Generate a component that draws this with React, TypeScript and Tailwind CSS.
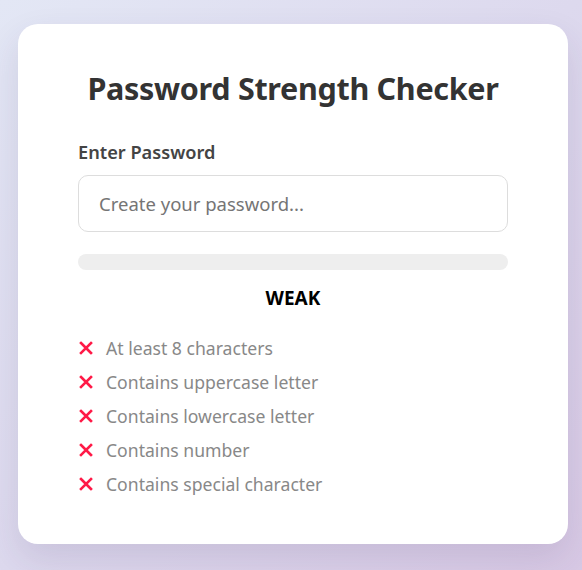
import React from "react";

const reqs = [
  "At least 8 characters",
  "Contains uppercase letter",
  "Contains lowercase letter",
  "Contains number",
  "Contains special character",
];

function XIcon() {
  return (
    <svg width="14" height="14" viewBox="0 0 14 14" className="shrink-0">
      <path d="M2 2 L12 12 M12 2 L2 12" stroke="#ff1a47" strokeWidth="2.6" strokeLinecap="square" />
    </svg>
  );
}

export default function App() {
  return (
    <div
      className="min-h-[570px] w-full flex justify-center items-start pt-[24px] pl-[4px] bg-[linear-gradient(135deg,#e3e7f5_0%,#ddd9ee_50%,#d8c9e5_100%)]"
      style={{ fontFamily: '"Noto Sans", "Open Sans", sans-serif' }}
    >
      <div className="w-[550px] h-[520px] bg-white rounded-[20px] shadow-[0_15px_35px_rgba(60,40,90,0.12)] px-[60px] pt-[45px] flex flex-col">
        <h1 className="h-[38px] leading-[38px] text-center text-[30.5px] font-bold text-[#333] tracking-[-0.3px]">
          Password Strength Checker
        </h1>
        <label className="mt-[32px] h-[27px] leading-[27px] text-[18.2px] font-semibold text-[#444]">
          Enter Password
        </label>
        <input
          type="password"
          placeholder="Create your password..."
          className="mt-[9px] h-[57px] w-full border border-[#ddd] rounded-[10px] px-[20px] text-[18.5px] text-[#333] placeholder:text-[#757575] outline-none"
        />
        <div className="mt-[22px] h-[16px] w-full rounded-full bg-[#eee]" />
        <div className="mt-[15px] h-[27px] leading-[27px] text-center text-[19px] font-bold text-black">
          WEAK
        </div>
        <ul className="mt-[19px] flex flex-col">
          {reqs.map((r) => (
            <li key={r} className="h-[34px] flex items-center gap-[13px] pl-[1px]">
              <XIcon />
              <span className="text-[17.6px] text-[#888] leading-[27px]">{r}</span>
            </li>
          ))}
        </ul>
      </div>
    </div>
  );
}
